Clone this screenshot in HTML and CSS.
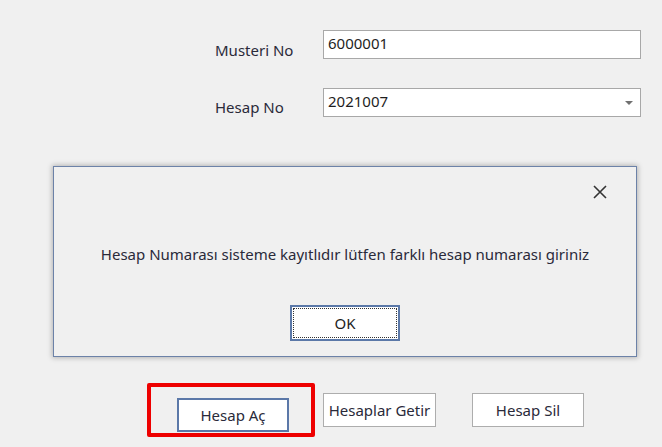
FILE: index.html
```html
<!DOCTYPE html>
<html>
<head>
<meta charset="utf-8">
<link rel="stylesheet" href="styles.css">
</head>
<body>
<div class="window">
  <div class="form">
    <div class="row">
      <label class="lbl">Musteri No</label>
      <div class="field">6000001</div>
    </div>
    <div class="row row2">
      <label class="lbl">Hesap No</label>
      <div class="field combo">2021007<span class="arrow"></span></div>
    </div>
  </div>
  <div class="dialog">
    <div class="dlg-top">
      <svg class="close" width="16" height="16" viewBox="0 0 16 16"><path d="M2 2 L14 14 M14 2 L2 14" stroke="#333" stroke-width="1.6" fill="none"/></svg>
    </div>
    <div class="msg">Hesap Numarası sisteme kayıtlıdır lütfen farklı hesap numarası giriniz</div>
    <div class="dlg-btns">
      <div class="okbtn"><span class="focus">OK</span></div>
    </div>
  </div>
  <div class="buttons">
    <div class="highlight"><div class="btn default">Hesap Aç</div></div>
    <div class="btn">Hesaplar Getir</div>
    <div class="btn sil">Hesap Sil</div>
  </div>
</div>
</body>
</html>
```
FILE: styles.css
```css
html, body {
  margin: 0;
  padding: 0;
  background: #f0f0f0;
}
body {
  width: 662px;
  height: 447px;
  overflow: hidden;
  font-family: "Noto Sans", "DejaVu Sans", sans-serif;
  font-size: 15px;
  line-height: 20px;
  color: #1e1e1e;
}
.window {
  display: flex;
  flex-direction: column;
}
.form {
  padding: 30px 0 0 215px;
  display: flex;
  flex-direction: column;
  gap: 29px;
}
.row {
  display: flex;
  align-items: flex-start;
  height: 29px;
}
.lbl {
  width: 108px;
  margin-top: 10px;
  color: #2a2a3a;
}
.row2 .lbl { margin-top: 9px; }
.field {
  box-sizing: border-box;
  width: 318px;
  height: 29px;
  background: #fff;
  border: 1px solid #a8a8a8;
  padding: 2px 0 0 4px;
  position: relative;
}
.arrow {
  position: absolute;
  right: 7px;
  top: 12px;
  width: 0;
  height: 0;
  border-left: 4px solid transparent;
  border-right: 4px solid transparent;
  border-top: 4px solid #707070;
}
.dialog {
  box-sizing: border-box;
  margin: 49px 0 0 53px;
  width: 584px;
  height: 191px;
  border: 1px solid #6c82a8;
  background: #f0f0f0;
  box-shadow: 0 0 5px 1px rgba(0,0,0,0.25);
  display: flex;
  flex-direction: column;
}
.dlg-top {
  display: flex;
  justify-content: flex-end;
  padding: 17px 28px 0 0;
  height: 16px;
}
.msg {
  text-align: center;
  margin-top: 44px;
  color: #2a2a3a;
}
.dlg-btns {
  display: flex;
  justify-content: center;
  margin-top: 41px;
}
.okbtn {
  box-sizing: border-box;
  width: 110px;
  height: 36px;
  border: 2px solid #5b78a8;
  background: #fff;
  padding: 1px;
  display: flex;
}
.focus {
  flex: 1;
  border: 1px dotted #333;
  display: flex;
  align-items: center;
  justify-content: center;
  color: #1e1e1e;
}
.buttons {
  display: flex;
  align-items: center;
  margin: 26px 0 0 147px;
}
.highlight {
  box-sizing: border-box;
  width: 168px;
  height: 54px;
  border: 4px solid #ee0000;
  border-radius: 2px;
  padding: 11px 0 0 26px;
}
.btn {
  box-sizing: border-box;
  width: 113px;
  height: 34px;
  background: #fff;
  border: 1px solid #adadad;
  display: flex;
  align-items: center;
  justify-content: center;
  color: #2a2a3a;
}
.btn.default {
  width: 112px;
  border: 2px solid #5b78a8;
}
.highlight + .btn { margin-left: 8px; }
.btn.sil { margin-left: 36px; width: 112px; }
```
